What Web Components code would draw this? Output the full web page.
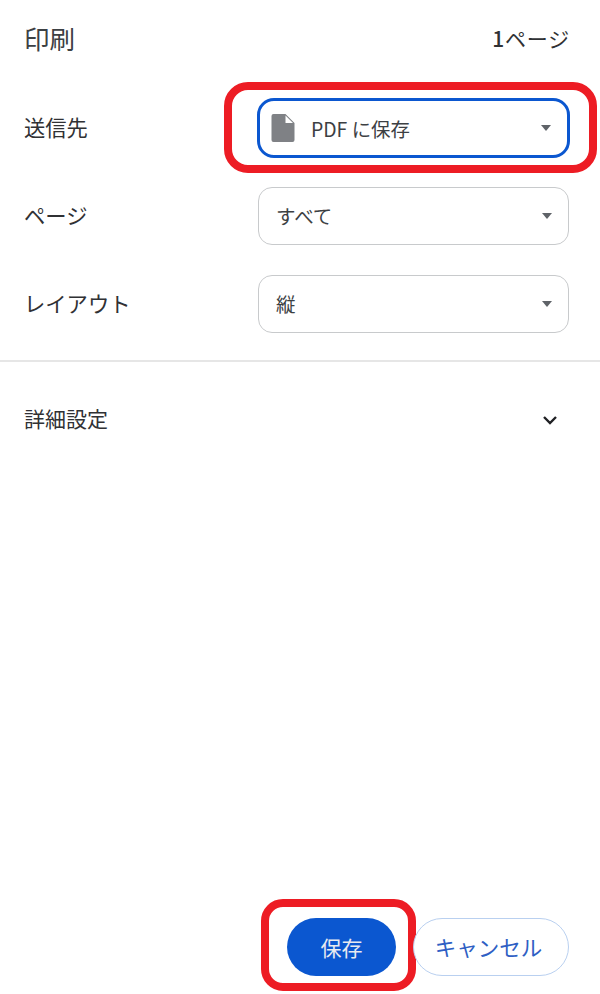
<!DOCTYPE html>
<html lang="ja"><head><meta charset="utf-8"><title>印刷</title>
<style>
html,body{margin:0;padding:0;background:#fff}
body{font-family:"Noto Sans CJK JP","Noto Sans",sans-serif;color:#202124}
</style></head><body>
<print-panel>
  <print-header slot="header" pages="1ページ">印刷</print-header>
  <print-row label="送信先"><print-select focused mark><file-icon></file-icon><span>PDF に保存</span></print-select></print-row>
  <print-row label="ページ"><print-select>すべて</print-select></print-row>
  <print-row label="レイアウト"><print-select>縦</print-select></print-row>
  <print-details>詳細設定</print-details>
  <print-actions slot="footer"></print-actions>
</print-panel>
<script>
function def(name, html, init){
  customElements.define(name, class extends HTMLElement{
    constructor(){super();this.attachShadow({mode:'open'}).innerHTML=html;}
    connectedCallback(){ if(init) init(this); }
  });
}
const FONT='font-family:"Noto Sans CJK JP","Noto Sans",sans-serif;';
def('print-panel',`<style>
:host{display:flex;flex-direction:column;width:600px;height:994px;box-sizing:border-box;padding:0 31px 18px 24px;overflow:hidden;${FONT}}
.body{display:flex;flex-direction:column}
.foot{margin-top:auto}
</style><slot name="header"></slot><div class="body"><slot></slot></div><div class="foot"><slot name="footer"></slot></div>`);
def('print-header',`<style>
:host{display:flex;justify-content:space-between;align-items:center;height:76px;margin-bottom:23px;color:#3c4043}
.t{font-size:25.5px;line-height:72px;font-weight:400}
.p{font-size:21px;line-height:72px;font-weight:400;color:#303134;margin-right:-1px;letter-spacing:.8px}
.p::first-letter{font-weight:500}
</style><div class="t"><slot></slot></div><div class="p"></div>`,el=>{el.shadowRoot.querySelector('.p').textContent=el.getAttribute('pages');});
def('print-row',`<style>
:host{display:grid;grid-template-columns:234px 311px;align-items:center;margin-bottom:30px}
.l{font-size:21.3px;line-height:30px;color:#303134;position:relative;top:-1px}
</style><div class="l"></div><slot></slot>`,el=>{el.shadowRoot.querySelector('.l').textContent=el.getAttribute('label');});
def('print-select',`<style>
:host{display:flex;align-items:center;position:relative;box-sizing:border-box;height:58px;border:1.5px solid #c8cacc;border-radius:14px;padding:0 16px 0 17px;font-size:19.5px;color:#3c4043;background:#fff}
:host([focused]){border:3px solid #0b57d0;border-radius:17px;margin:-1px;height:60px;padding-left:11px;padding-right:16px;font-size:19.4px}
.v{flex:1;display:flex;align-items:center;gap:16px;white-space:nowrap;position:relative;top:-1px}
:host([focused]) .v{top:0}
.a{width:0;height:0;border-left:5.5px solid transparent;border-right:5.5px solid transparent;border-top:6px solid #5f6368;margin-bottom:1px}
.mark{display:none;position:absolute;left:-36px;top:-19px;width:373px;height:91px;box-sizing:border-box;border:8px solid #ed1c24;border-radius:24px;pointer-events:none}
:host([mark]) .mark{display:block}
</style><div class="v"><slot></slot></div><div class="a"></div><div class="mark"></div>`);
def('file-icon',`<style>:host{display:flex;width:24px;height:30px}svg{display:block}</style>
<svg width="24" height="30" viewBox="0 0 24 30"><path d="M2.5 1H14.5L23.5 10V27a2 2 0 0 1-2 2H2.5a2 2 0 0 1-2-2V3a2 2 0 0 1 2-2Z" fill="#7f8185"/><path d="M14.5 2.5V10H22Z" fill="#fff"/></svg>`);
def('print-details',`<style>
:host{display:flex;position:relative;justify-content:space-between;align-items:center;height:118px;margin-top:-3px;box-sizing:border-box;padding-top:1px;font-size:21px;color:#303134}
.rule{position:absolute;left:-24px;width:600px;top:0;height:2px;background:#e6e6e6}
span{position:relative;top:-2px}
svg{margin-right:11px;display:block}
</style><div class="rule"></div><span><slot></slot></span>
<svg width="16" height="10" viewBox="0 0 16 10"><path d="M2 2l6 6 6-6" fill="none" stroke="#202124" stroke-width="2.4"/></svg>`);
def('print-actions',`<style>
:host{display:flex;justify-content:flex-end;align-items:center;gap:17px}
button{${FONT}position:relative;height:58px;border-radius:29px;font-size:21px;padding:0;background:#fff;line-height:54px}
.s{width:109px;background:#0b57d0;color:#e8eaf0;border:0}
.c{width:156px;color:#2f5fc4;border:1.5px solid #b9d0f0;font-size:21.5px;padding-right:5px}
.mark{position:absolute;left:-26px;top:-19px;width:155px;height:92px;box-sizing:border-box;border:8px solid #ed1c24;border-radius:22px;pointer-events:none}
</style><button class="s">保存<div class="mark"></div></button><button class="c">キャンセル</button>`);
</script>
</body></html>
